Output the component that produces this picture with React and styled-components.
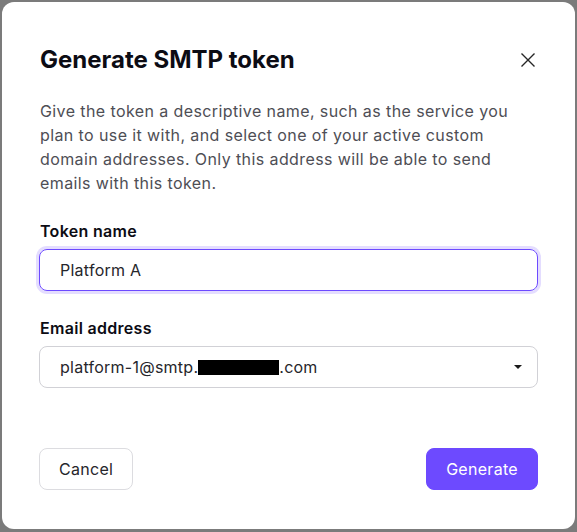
import React from 'react'
import styled, { createGlobalStyle } from 'styled-components'

const Global = createGlobalStyle`
  html, body {
    margin: 0;
    padding: 0;
    background: #7b7b7b;
    font-family: Inter, "Noto Sans", sans-serif;
  }
  * {
    box-sizing: border-box;
  }
`

const Backdrop = styled.div`
  width: 577px;
  height: 532px;
  padding: 2px 2px 3px 2px;
`

const Modal = styled.div`
  height: 100%;
  background: #fff;
  border-radius: 12px;
  padding: 44px 37px 39px 37px;
  display: flex;
  flex-direction: column;
`

const Header = styled.div`
  display: flex;
  align-items: center;
  justify-content: space-between;
  height: 28px;
`

const Title = styled.h2`
  margin: 0 0 0 1px;
  font-size: 24px;
  line-height: 28px;
  font-weight: 700;
  color: #0c0c14;
`

const Close = styled.button`
  border: 0;
  background: none;
  padding: 0;
  margin-right: 2px;
  width: 16px;
  height: 16px;
  display: flex;
  align-items: center;
  justify-content: center;
  color: #262626;
`

const Description = styled.p`
  margin: 25px 0 0 1px;
  font-size: 16px;
  line-height: 24px;
  letter-spacing: 0.4px;
  color: #4e4e55;
`

const Field = styled.div`
  display: flex;
  flex-direction: column;
  margin-top: ${props => props.top}px;
`

const Label = styled.label`
  font-size: 16px;
  line-height: 24px;
  font-weight: 600;
  letter-spacing: 0.3px;
  color: #0c0c14;
  margin: 0 0 6px 1px;
`

const Input = styled.div`
  height: 42px;
  border: 1px solid ${props => (props.focused ? '#6d4aff' : '#d1d1d6')};
  border-radius: 8px;
  box-shadow: ${props => (props.focused ? '0 0 0 3px #e4ddff' : 'none')};
  display: flex;
  align-items: center;
  justify-content: space-between;
  padding: 0 14px 0 20px;
  font-size: 16px;
  letter-spacing: 0.25px;
  color: #26262b;
`

const Redacted = styled.span`
  display: inline-block;
  width: 81px;
  height: 15px;
  background: #000;
  vertical-align: -2px;
`

const Footer = styled.div`
  margin-top: auto;
  display: flex;
  justify-content: space-between;
`

const Button = styled.button`
  height: 42px;
  padding: 0 19px;
  border-radius: 8px;
  font-family: inherit;
  font-size: 16px;
  letter-spacing: 0.3px;
  border: 1px solid ${props => (props.primary ? '#6d4aff' : '#dcdce0')};
  background: ${props => (props.primary ? '#6d4aff' : '#fff')};
  color: ${props => (props.primary ? '#fff' : '#26262b')};
`

const App = () => (
  <Backdrop>
    <Global />
    <Modal>
      <Header>
        <Title>Generate SMTP token</Title>
        <Close aria-label="Close">
          <svg width="16" height="16" viewBox="0 0 16 16">
            <path d="M1.5 1.5 L14.5 14.5 M14.5 1.5 L1.5 14.5" stroke="currentColor" strokeWidth="1.4" fill="none" />
          </svg>
        </Close>
      </Header>
      <Description>
        Give the token a descriptive name, such as the service you plan to use it with, and select one of your
        active custom domain addresses. Only this address will be able to send emails with this token.
      </Description>
      <Field top={24}>
        <Label>Token name</Label>
        <Input focused>Platform A</Input>
      </Field>
      <Field top={25}>
        <Label>Email address</Label>
        <Input>
          <span>
            platform-1@smtp.<Redacted />.com
          </span>
          <svg width="10" height="6" viewBox="0 0 10 6">
            <path d="M1 1 L9 1 L5 5 Z" fill="#1a1a1a" />
          </svg>
        </Input>
      </Field>
      <Footer>
        <Button>Cancel</Button>
        <Button primary>Generate</Button>
      </Footer>
    </Modal>
  </Backdrop>
)

export default App
